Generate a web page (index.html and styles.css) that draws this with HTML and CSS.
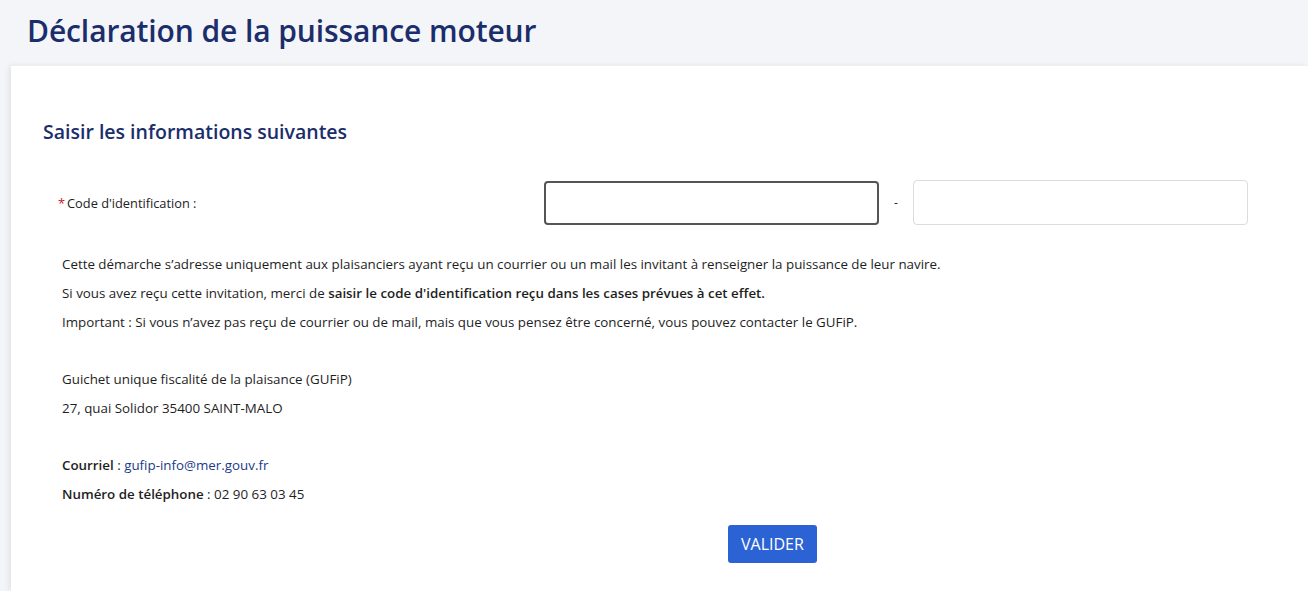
FILE: index.html
```html
<!DOCTYPE html>
<html lang="fr">
<head>
<meta charset="utf-8">
<title>Déclaration de la puissance moteur</title>
<link rel="stylesheet" href="styles.css">
</head>
<body>
<header class="page-header">
  <h1 class="page-title">Déclaration de la puissance moteur</h1>
</header>
<main class="card">
  <h2 class="section-title">Saisir les informations suivantes</h2>
  <div class="form-row">
    <label class="field-label" for="code1"><span class="req">*</span>Code d'identification :</label>
    <input class="field field-focus" id="code1" type="text">
    <span class="sep">-</span>
    <input class="field" id="code2" type="text">
  </div>
  <div class="info">
    <p>Cette démarche s’adresse uniquement aux plaisanciers ayant reçu un courrier ou un mail les invitant à renseigner la puissance de leur navire.</p>
    <p>Si vous avez reçu cette invitation, merci de <b>saisir le code d'identification reçu dans les cases prévues à cet effet.</b></p>
    <p>Important : Si vous n’avez pas reçu de courrier ou de mail, mais que vous pensez être concerné, vous pouvez contacter le GUFiP.</p>
    <p class="gap">Guichet unique fiscalité de la plaisance (GUFiP)</p>
    <p>27, quai Solidor 35400 SAINT-MALO</p>
    <p class="gap"><b>Courriel</b> : <a class="mail" href="#">gufip-info@mer.gouv.fr</a></p>
    <p><b>Numéro de téléphone</b> : 02 90 63 03 45</p>
  </div>
  <div class="actions">
    <button class="btn" type="button">VALIDER</button>
  </div>
</main>
</body>
</html>
```
FILE: styles.css
```css
html, body {
  margin: 0;
  padding: 0;
}
body {
  background: #f3f5f9;
  font-family: "Open Sans", "Noto Sans", sans-serif;
  color: #1e1e1e;
  overflow: hidden;
}
.page-header {
  padding: 11px 0 0 27px;
  height: 66px;
  box-sizing: border-box;
}
.page-title {
  margin: 0;
  font-size: 30px;
  line-height: 40px;
  font-weight: 600;
  color: #1b2e6b;
  letter-spacing: -0.1px;
}
.card {
  margin-left: 11px;
  background: #fff;
  box-shadow: -2px 0 6px rgba(0, 0, 30, 0.08);
  padding: 52px 0 28px 32px;
  min-height: 440px;
}
.section-title {
  margin: 0;
  font-size: 19.5px;
  line-height: 28px;
  font-weight: 600;
  color: #1b2e6b;
}
.form-row {
  display: grid;
  grid-template-columns: 486px 335px 34px 335px;
  align-items: center;
  margin-top: 34px;
  padding-left: 15px;
}
.field-label {
  font-size: 12.8px;
  color: #222;
}
.req {
  color: #c9191e;
  margin-right: 2px;
}
.field {
  height: 45px;
  box-sizing: border-box;
  border: 1px solid #dcdcdc;
  border-radius: 4px;
  background: #fff;
  font: inherit;
  padding: 0 10px;
}
.field-focus {
  border: 2px solid #555;
  height: 44px;
}
.sep {
  text-align: center;
  font-size: 12px;
}
.info {
  padding-left: 19px;
  margin-top: 29px;
  font-size: 13.35px;
  line-height: 20px;
}
.info p {
  margin: 0 0 9px;
}
.info p.gap {
  margin-top: 37px;
}
.info b {
  font-weight: 600;
}
.mail {
  color: #1b3a8a;
  text-decoration: none;
}
.actions {
  display: flex;
  margin-top: 21px;
  padding-left: 685px;
}
.btn {
  background: #2b63d5;
  color: #fff;
  border: 0;
  border-radius: 3px;
  font-family: "Open Sans", sans-serif;
  font-size: 16px;
  height: 38px;
  padding: 0 13px;
}
```
